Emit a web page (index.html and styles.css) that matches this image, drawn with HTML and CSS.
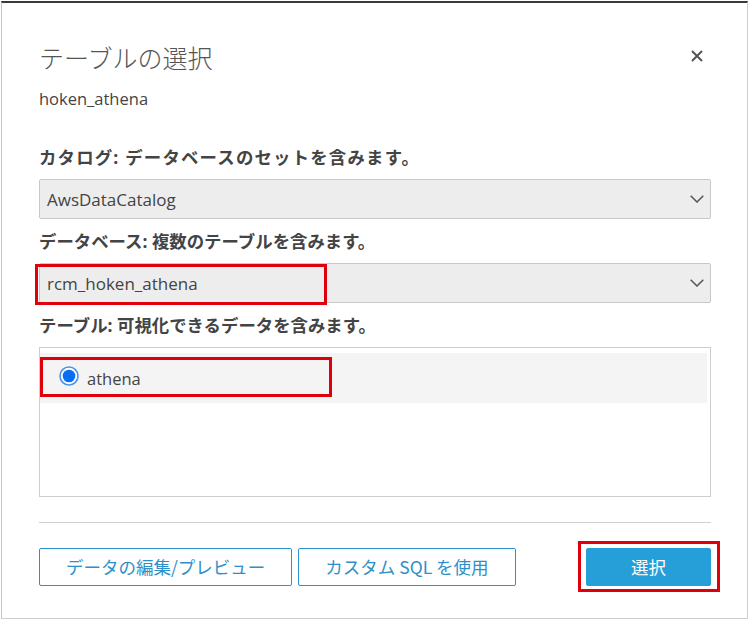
FILE: index.html
```html
<!DOCTYPE html>
<html lang="ja">
<head>
<meta charset="utf-8">
<title>テーブルの選択</title>
<link rel="stylesheet" href="styles.css">
</head>
<body>
<div class="frame">
  <div class="header">
    <h1 class="title">テーブルの選択</h1>
    <svg class="close" width="12" height="12" viewBox="0 0 12 12"><path d="M1 1 L11 11 M11 1 L1 11" stroke="#545454" stroke-width="2" fill="none"/></svg>
  </div>
  <div class="subtitle">hoken_athena</div>

  <div class="label first">カタログ: データベースのセットを含みます。</div>
  <div class="select">
    <span class="value">AwsDataCatalog</span>
    <svg class="chev" width="14" height="8" viewBox="0 0 14 8"><path d="M0.7 0.7 L7 7 L13.3 0.7" stroke="#545454" stroke-width="1.5" fill="none"/></svg>
  </div>

  <div class="label">データベース: 複数のテーブルを含みます。</div>
  <div class="select marked">
    <span class="value">rcm_hoken_athena</span>
    <svg class="chev" width="14" height="8" viewBox="0 0 14 8"><path d="M0.7 0.7 L7 7 L13.3 0.7" stroke="#545454" stroke-width="1.5" fill="none"/></svg>
    <span class="mark mark-db"></span>
  </div>

  <div class="label">テーブル: 可視化できるデータを含みます。</div>
  <div class="list">
    <div class="row">
      <svg class="radio" width="20" height="20" viewBox="0 0 20 20"><circle cx="10" cy="10" r="9" fill="#fff" stroke="#4a92ea" stroke-width="1.6"/><circle cx="10" cy="10" r="6.3" fill="#0a6ef4"/></svg>
      <span class="row-text">athena</span>
      <span class="mark mark-row"></span>
    </div>
  </div>

  <div class="rule"></div>

  <div class="actions">
    <button class="btn outline">データの編集/プレビュー</button>
    <button class="btn outline">カスタム SQL を使用</button>
    <button class="btn primary">選択<span class="mark mark-btn"></span></button>
  </div>
</div>
</body>
</html>
```

FILE: styles.css
```css
html, body {
  margin: 0;
  padding: 0;
  background: #fff;
}

body {
  font-family: "Open Sans", "Noto Sans CJK JP", sans-serif;
  color: #444;
}

.frame {
  box-sizing: border-box;
  margin: 1px 0 0 1px;
  width: 747px;
  height: 618px;
  border-top: 2px solid #3a3a3a;
  border-left: 1px solid #c4c4c4;
  border-right: 1px solid #cfcfcf;
  border-bottom: 1px solid #cfcfcf;
  padding: 37px 36px 0 37px;
}

.header {
  display: flex;
  align-items: center;
  justify-content: space-between;
  height: 34px;
}

.title {
  margin: 0;
  font-family: "Noto Sans CJK JP", sans-serif;
  font-weight: 300;
  font-size: 25px;
  line-height: 34px;
  color: #555;
}

.close {
  margin-right: 8px;
  margin-top: -2px;
}

.subtitle {
  margin-top: 14px;
  font-size: 16.5px;
  line-height: 22px;
  color: #444;
}

.label {
  margin-top: 10px;
  font-weight: bold;
  font-size: 17.4px;
  line-height: 24px;
  color: #444;
  margin-bottom: 10px;
  white-space: nowrap;
}

.label.first {
  margin-top: 35px;
  letter-spacing: 1.2px;
}

.select {
  position: relative;
  box-sizing: border-box;
  height: 40px;
  display: flex;
  align-items: center;
  justify-content: space-between;
  padding: 0 6px 0 7px;
  background: #ededed;
  border: 1px solid #c8c8c8;
  border-radius: 2px;
  font-size: 17px;
  color: #444;
}

.chev {
  display: block;
}

.mark {
  position: absolute;
  box-sizing: border-box;
  border: 3px solid #e0000b;
  pointer-events: none;
}

.mark-db {
  left: -5px;
  top: 0;
  width: 292px;
  height: 41px;
}

.list {
  box-sizing: border-box;
  height: 150px;
  border: 1px solid #cdcdcd;
  padding: 5px 3px 0 0;
}

.row {
  position: relative;
  height: 50px;
  background: #f4f4f4;
  display: flex;
  align-items: center;
  padding-left: 19px;
  box-sizing: border-box;
}

.radio {
  display: block;
  margin-top: -4px;
}

.row-text {
  margin-left: 8px;
  font-size: 16.5px;
  color: #444;
}

.mark-row {
  left: 0;
  top: 4px;
  width: 292px;
  height: 40px;
}

.rule {
  margin-top: 25px;
  height: 1px;
  background: #d0d0d0;
}

.actions {
  margin-top: 25px;
  display: flex;
  gap: 6px;
}

.btn {
  position: relative;
  box-sizing: border-box;
  height: 38px;
  border-radius: 2px;
  font-family: "Noto Sans CJK JP", sans-serif;
  font-size: 17.5px;
  line-height: 36px;
  padding: 0 26px;
  cursor: pointer;
}

.btn.outline {
  background: #fff;
  border: 1px solid #2b93cb;
  color: #2f8fc8;
}

.btn.primary {
  margin-left: auto;
  width: 125px;
  padding: 0;
  background: #269ed7;
  border: 1px solid #269ed7;
  color: #fff;
}

.mark-btn {
  left: -9px;
  top: -8px;
  width: 142px;
  height: 51px;
}
```
